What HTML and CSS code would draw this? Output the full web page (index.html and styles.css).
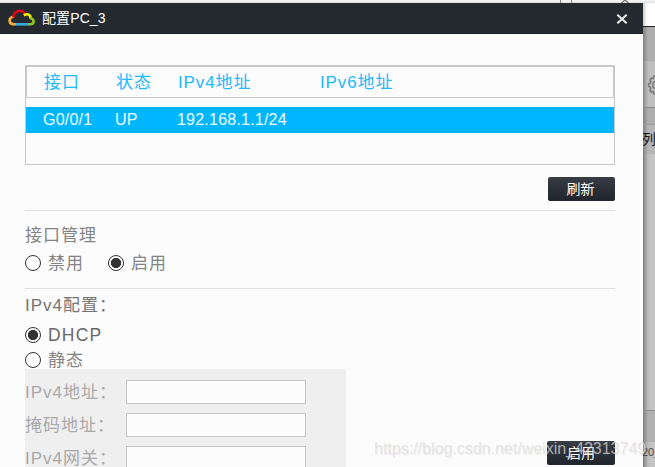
FILE: index.html
```html
<!DOCTYPE html>
<html lang="zh-CN">
<head>
<meta charset="utf-8">
<title>配置PC_3</title>
<link rel="stylesheet" href="styles.css">
</head>
<body>
<div class="desktop">
  <div class="topstrip">
    <svg width="655" height="3" viewBox="0 0 655 3"><path d="M560.5 0v3M571.5 0v3" stroke="#888"/><path d="M621.5 3l3.5-3 3.5 3" fill="none" stroke="#777" stroke-width="1.3"/></svg>
  </div>
  <div class="columns">
    <main class="dialog">
      <header class="titlebar">
        <svg class="logo" width="28" height="18" viewBox="0 0 28 18" fill="none" stroke-width="2.6">
          <path d="M8.2 15.2H5.5C.5 15 .1 8.6 5.7 7.8" stroke="#f9b233"/>
          <path d="M5.5 8.6C5.4 1.5 14.8-.7 17 5.4" stroke="#e30613"/>
          <path d="M15.8 6.3C20 3.9 23.2 6.3 22.5 10" stroke="#ffed00"/>
          <path d="M22 9C27 10 26.5 15.2 22.3 15.2H20" stroke="#95c11f"/>
          <path d="M7.5 15.3H20.5" stroke="#36a9e1"/>
        </svg>
        <span class="title">配置PC_3</span>
        <svg class="close" width="12" height="10" viewBox="0 0 12 10"><path d="M1.3.7l9.4 8.6M10.7.7L1.3 9.3" stroke="#e8e8e8" stroke-width="2"/></svg>
      </header>
      <div class="content">
        <section class="table">
          <div class="thead"><span>接口</span><span>状态</span><span>IPv4地址</span><span>IPv6地址</span></div>
          <div class="trow"><span>G0/0/1</span><span>UP</span><span>192.168.1.1/24</span><span></span></div>
        </section>
        <button class="btn refresh">刷新</button>
        <section class="manage">
          <div class="label">接口管理</div>
          <div class="radios">
            <label class="option"><i class="radio"></i><span>禁用</span></label>
            <label class="option"><i class="radio on"></i><span>启用</span></label>
          </div>
        </section>
        <section class="ipv4">
          <div class="label">IPv4配置：</div>
          <label class="option dhcp"><i class="radio on"></i>DHCP</label>
          <label class="option static"><i class="radio"></i><span>静态</span></label>
          <div class="bottom">
            <div class="panel">
              <div class="field"><span>IPv4地址：</span><div class="input"></div></div>
              <div class="field"><span>掩码地址：</span><div class="input"></div></div>
              <div class="field"><span>IPv4网关：</span><div class="input"></div></div>
            </div>
            <button class="btn apply">启用</button>
          </div>
        </section>
      </div>
    </main>
    <aside class="behind">
      <div class="white"></div>
      <div class="bar"></div>
      <div class="tools"><svg width="12" height="46" viewBox="0 0 12 46" fill="none" stroke="#777" stroke-width="1.5"><path d="M12 14.5l-1.2 1-.5 2-2-.5-1.5 2 1.2 1.8-.8 1.5-1.6.3v2.8l1.6.5.8 1.5-1.2 1.9 1.5 1.8 2-.6.5 2 1.2 1.1"/><path d="M12 20.5c-3 1.2-3 5.8 0 7"/></svg></div>
      <div class="gap"></div>
      <div class="heading">列</div>
      <div class="list"></div>
      <div class="bar2"></div>
      <div class="foot">20_</div>
    </aside>
  </div>
  <div class="watermark">https://blog.csdn.net/weixin_42313749</div>
</div>
</body>
</html>
```
FILE: styles.css
```css
* { box-sizing: border-box; }
body {
  margin: 0;
  overflow: hidden;
  font-family: "Liberation Sans", "Noto Sans CJK SC", sans-serif;
}
.desktop {
  position: relative;
  width: 655px;
  height: 467px;
  overflow: hidden;
  background: #fff;
}
.topstrip { height: 3px; background: linear-gradient(#f8f8f8, #dedede); }
.topstrip svg { display: block; }
.columns { display: flex; height: 464px; }
.dialog { width: 643px; background: #fcfcfc; flex: none; }
.titlebar {
  height: 31px;
  display: flex;
  align-items: center;
  padding: 0 15px 0 8px;
  background: #252930;
  border-bottom: 1px solid #1d2026;
  color: #fff;
}
.logo { margin-right: 6px; }
.title { flex: 1; font-size: 14px; letter-spacing: .1px; line-height: 20px; }
.close { margin-top: 2px; }
.content { padding: 31px 28px 0 25px; }
.table { height: 100px; border: 1px solid #c8c8c8; }
.thead, .trow {
  display: grid;
  grid-template-columns: 72px 62px 142px 1fr;
  white-space: nowrap;
}
.thead {
  height: 32px;
  border: 1px solid #c8c8c8;
  padding-left: 17px;
  line-height: 31px;
  font-size: 17px;
  letter-spacing: .9px;
  color: #20b9fc;
}
.trow {
  height: 26px;
  margin-top: 9px;
  padding-left: 17px;
  line-height: 25px;
  font-size: 16px;
  letter-spacing: .22px;
  background: #00b7ff;
  color: #f0fbff;
}
.btn {
  display: block;
  width: 67px;
  height: 24px;
  padding: 0;
  border: 0;
  border-radius: 2px;
  background: linear-gradient(#373c45, #20242c);
  color: #fff;
  font: 14px/24px "Liberation Sans", "Noto Sans CJK SC", sans-serif;
}
.refresh { margin: 12px 0 9px auto; padding-right: 2px; }
.manage { border-top: 1px solid #e0e0e0; height: 78px; padding-top: 13px; }
.label, .option { font-size: 17px; letter-spacing: 1px; line-height: 24px; color: #848484; }
.radios { display: flex; gap: 24px; margin-top: 3px; }
.option { display: flex; align-items: center; }
.option span { padding-top: 1px; line-height: 23px; }
.radio {
  display: block;
  flex: none;
  width: 16px;
  height: 16px;
  margin-right: 7px;
  border: 1.5px solid #333;
  border-radius: 50%;
  background: #fff;
}
.radio.on { background: radial-gradient(circle, #333 0 4.8px, #fff 5.4px); }
.ipv4 { border-top: 1px solid #e0e0e0; padding-top: 5px; }
.ipv4 > .label { color: #747474; }
.dhcp { margin-top: 5px; color: #686868; font-size: 17.5px; letter-spacing: 1.2px; }
.static { margin-top: 1px; }
.bottom { display: flex; justify-content: space-between; align-items: flex-start; margin-top: -3px; }
.panel { width: 321px; height: 110px; padding-top: 11px; background: #efefef; }
.field { display: flex; height: 24px; margin-bottom: 9px; color: #a9a9a9; }
.field span { width: 101px; font-size: 17px; letter-spacing: 1px; line-height: 26px; white-space: nowrap; }
.input { width: 180px; height: 24px; border: 1px solid #c7c7c7; background: #fcfcfc; }
.apply { width: 68px; margin-top: 72px; }
.behind {
  width: 12px;
  overflow: hidden;
  background: linear-gradient(90deg, #7c7c7c, #b4b4b4 4px, #c4c4c4 7px);
  white-space: nowrap;
}
.white { height: 24px; background: linear-gradient(90deg, #ccc, #fff 4px); border-bottom: 1px solid #222; }
.bar { height: 34px; background: linear-gradient(90deg, #828282, #aeaeae 5px); }
.tools { height: 47px; background: linear-gradient(90deg, #888, #bfbfbf 5px); border-bottom: 1px solid #888; }
.tools svg { display: block; }
.gap { height: 16px; background: linear-gradient(90deg, #828282, #adadad 5px); }
.heading { height: 30px; border-top: 1px solid #999; background: linear-gradient(90deg, #808080, #b5b5b5 5px); font-size: 14px; line-height: 29px; color: #111; text-indent: -1px; }
.list { height: 257px; border-bottom: 1px solid #8c8c8c; }
.bar2 { height: 31px; background: linear-gradient(90deg, #808080, #b1b1b1 5px); }
.foot { font-size: 11px; line-height: 20px; color: #444; text-indent: -1px; }
.watermark {
  position: absolute;
  left: 374px;
  top: 439px;
  font-size: 16px;
  line-height: 20px;
  white-space: nowrap;
  color: rgba(222, 222, 222, .72);
  text-shadow: 1px 1px 1px rgba(120, 120, 120, .12);
}
```
